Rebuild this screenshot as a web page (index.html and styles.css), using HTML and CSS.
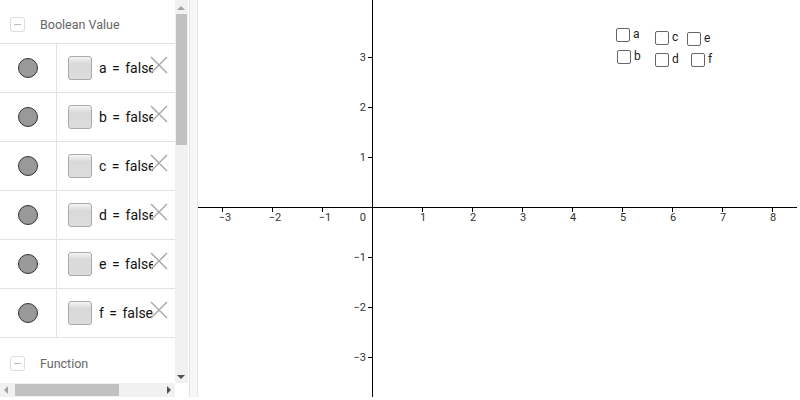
FILE: index.html
```html
<!DOCTYPE html>
<html lang="en">
<head>
	<meta charset="UTF-8">
	<title>Boolean Values</title>
	<link rel="stylesheet" href="styles.css">
</head>
<body>
	<div class="app">
		<div class="algebra">
			<div class="algebra-list">
				<div class="group-head"><span class="toggle"></span>Boolean Value</div>
				<div class="row">
					<div class="marble"><span class="dot"></span></div>
					<div class="item"><span class="check"></span><span class="expr">a = false</span><svg class="del" width="18" height="18" viewBox="0 0 18 18"><path d="M1 1L17 17M17 1L1 17"/></svg></div>
				</div>
				<div class="row">
					<div class="marble"><span class="dot"></span></div>
					<div class="item"><span class="check"></span><span class="expr">b = false</span><svg class="del" width="18" height="18" viewBox="0 0 18 18"><path d="M1 1L17 17M17 1L1 17"/></svg></div>
				</div>
				<div class="row">
					<div class="marble"><span class="dot"></span></div>
					<div class="item"><span class="check"></span><span class="expr">c = false</span><svg class="del" width="18" height="18" viewBox="0 0 18 18"><path d="M1 1L17 17M17 1L1 17"/></svg></div>
				</div>
				<div class="row">
					<div class="marble"><span class="dot"></span></div>
					<div class="item"><span class="check"></span><span class="expr">d = false</span><svg class="del" width="18" height="18" viewBox="0 0 18 18"><path d="M1 1L17 17M17 1L1 17"/></svg></div>
				</div>
				<div class="row">
					<div class="marble"><span class="dot"></span></div>
					<div class="item"><span class="check"></span><span class="expr">e = false</span><svg class="del" width="18" height="18" viewBox="0 0 18 18"><path d="M1 1L17 17M17 1L1 17"/></svg></div>
				</div>
				<div class="row">
					<div class="marble"><span class="dot"></span></div>
					<div class="item"><span class="check"></span><span class="expr">f = false</span><svg class="del" width="18" height="18" viewBox="0 0 18 18"><path d="M1 1L17 17M17 1L1 17"/></svg></div>
				</div>
				<div class="group-head last"><span class="toggle"></span>Function</div>
			</div>
			<div class="vscroll">
				<span class="arrow up"></span>
				<span class="vthumb"></span>
				<span class="arrow down"></span>
			</div>
			<div class="hscroll">
				<span class="arrow left"></span>
				<span class="hthumb"></span>
				<span class="arrow right"></span>
			</div>
			<div class="corner"></div>
		</div>
		<div class="splitter"></div>
		<div class="graphics">
			<svg class="axes" width="602" height="400" viewBox="198 0 602 400">
				<g class="lines">
					<line x1="197" y1="207.5" x2="797" y2="207.5"/>
					<line x1="372.5" y1="0" x2="372.5" y2="397"/>
					<!-- x ticks -->
					<path d="M222.5 208v4M272.5 208v4M322.5 208v4M422.5 208v4M472.5 208v4M522.5 208v4M572.5 208v4M622.5 208v4M672.5 208v4M722.5 208v4M772.5 208v4"/>
					<!-- y ticks -->
					<path d="M368 57.5h4M368 107.5h4M368 157.5h4M368 257.5h4M368 307.5h4M368 357.5h4"/>
				</g>
				<g class="xlabels">
					<text x="225" y="221">−3</text>
					<text x="275" y="221">−2</text>
					<text x="325" y="221">−1</text>
					<text x="423" y="221">1</text>
					<text x="473" y="221">2</text>
					<text x="523" y="221">3</text>
					<text x="573" y="221">4</text>
					<text x="623" y="221">5</text>
					<text x="673" y="221">6</text>
					<text x="723" y="221">7</text>
					<text x="773" y="221">8</text>
				</g>
				<g class="ylabels">
					<text x="366" y="61">3</text>
					<text x="366" y="111">2</text>
					<text x="366" y="161">1</text>
					<text x="366" y="221">0</text>
					<text x="366" y="261">−1</text>
					<text x="366" y="311">−2</text>
					<text x="366" y="361">−3</text>
				</g>
			</svg>
			<label class="gcheck" style="left: 418px; top: 28px;"><span class="gbox"></span>a</label>
			<label class="gcheck" style="left: 457px; top: 31px;"><span class="gbox"></span>c</label>
			<label class="gcheck" style="left: 489px; top: 32px;"><span class="gbox"></span>e</label>
			<label class="gcheck" style="left: 419px; top: 50px;"><span class="gbox"></span>b</label>
			<label class="gcheck" style="left: 457px; top: 53px;"><span class="gbox"></span>d</label>
			<label class="gcheck" style="left: 493px; top: 53px;"><span class="gbox"></span>f</label>
		</div>
	</div>
</body>
</html>
```

FILE: styles.css
```css
*{
	margin: 0;
	padding: 0;
	box-sizing: border-box;
}
body{
	width: 800px;
	height: 400px;
	overflow: hidden;
	background-color: #FFF;
	font-family: Roboto, "Liberation Sans", sans-serif;
}
.app{
	display: flex;
	width: 800px;
	height: 400px;
}
.algebra{
	display: grid;
	grid-template-columns: 175px 13px;
	grid-template-rows: 383px 14px;
	width: 189px;
	height: 397px;
}
.algebra-list{
	overflow: hidden;
}
.group-head{
	display: flex;
	align-items: center;
	height: 44px;
	padding: 5px 0 0 10px;
	font-size: 12.5px;
	color: #666;
	border-bottom: 1px solid #e2e2e2;
}
.group-head.last{
	height: 50px;
	padding-top: 0;
	border-bottom: none;
}
.toggle{
	position: relative;
	width: 15px;
	height: 15px;
	margin-right: 15px;
	border: 1px solid #ddd;
	border-radius: 3px;
}
.toggle::after{
	content: "";
	position: absolute;
	left: 3px;
	top: 6px;
	width: 7px;
	height: 1px;
	background-color: #bbb;
}
.row{
	display: flex;
	height: 49px;
	border-bottom: 1px solid #e2e2e2;
}
.marble{
	display: flex;
	align-items: center;
	justify-content: center;
	width: 57px;
	border-right: 1px solid #e2e2e2;
	padding-right: 1px;
}
.dot{
	width: 20px;
	height: 20px;
	border-radius: 50%;
	background-color: #999;
	border: 1px solid #333;
}
.item{
	display: flex;
	align-items: center;
	padding-left: 11px;
}
.check{
	flex: none;
	width: 24px;
	height: 24px;
	border: 1px solid #aaa;
	border-radius: 3px;
	background: linear-gradient(#f4f4f4, #d9d9d9 30%, #dcdcdc);
	margin-right: 7px;
}
.expr{
	flex: none;
	width: 54px;
	overflow: hidden;
	white-space: nowrap;
	font-size: 14px;
	word-spacing: 2px;
	color: #111;
}
.del{
	flex: none;
	margin-left: -3px;
	margin-top: -6px;
	stroke: #aaa;
	stroke-width: 1.5;
}
.vscroll{
	position: relative;
	background-color: #f1f1f1;
}
.vthumb{
	position: absolute;
	left: 1px;
	right: 1px;
	top: 14px;
	height: 131px;
	background-color: #c1c1c1;
}
.hscroll{
	position: relative;
	background-color: #f1f1f1;
}
.hthumb{
	position: absolute;
	top: 1px;
	bottom: 1px;
	left: 15px;
	width: 104px;
	background-color: #c1c1c1;
}
.corner{
	background-color: #FFF;
}
.arrow{
	position: absolute;
	width: 0;
	height: 0;
	border: 4px solid transparent;
}
.arrow.up{
	left: 2px;
	top: 2px;
	border-bottom-color: #a3a3a3;
}
.arrow.down{
	left: 2px;
	bottom: 0;
	border-top-color: #505050;
}
.arrow.left{
	left: 0;
	top: 3px;
	border-right-color: #a3a3a3;
}
.arrow.right{
	right: 0;
	top: 3px;
	border-left-color: #505050;
}
.splitter{
	width: 9px;
	height: 397px;
	background-color: #f7f7f7;
	border-left: 1px solid #e2e2e2;
	border-right: 1px solid #e6e6e6;
}
.graphics{
	position: relative;
	flex: 1;
	height: 400px;
}
.axes{
	display: block;
}
.lines line, .lines path{
	stroke: #000;
	stroke-width: 1;
	fill: none;
}
.xlabels text{
	font-size: 11px;
	fill: #333;
	text-anchor: middle;
}
.ylabels text{
	font-size: 11px;
	fill: #333;
	text-anchor: end;
}
.gcheck{
	position: absolute;
	display: flex;
	align-items: flex-start;
	font-size: 12px;
	line-height: 12px;
	color: #222;
}
.gbox{
	width: 14px;
	height: 14px;
	border: 1px solid #666;
	border-radius: 2px;
	margin-right: 3px;
}
```
